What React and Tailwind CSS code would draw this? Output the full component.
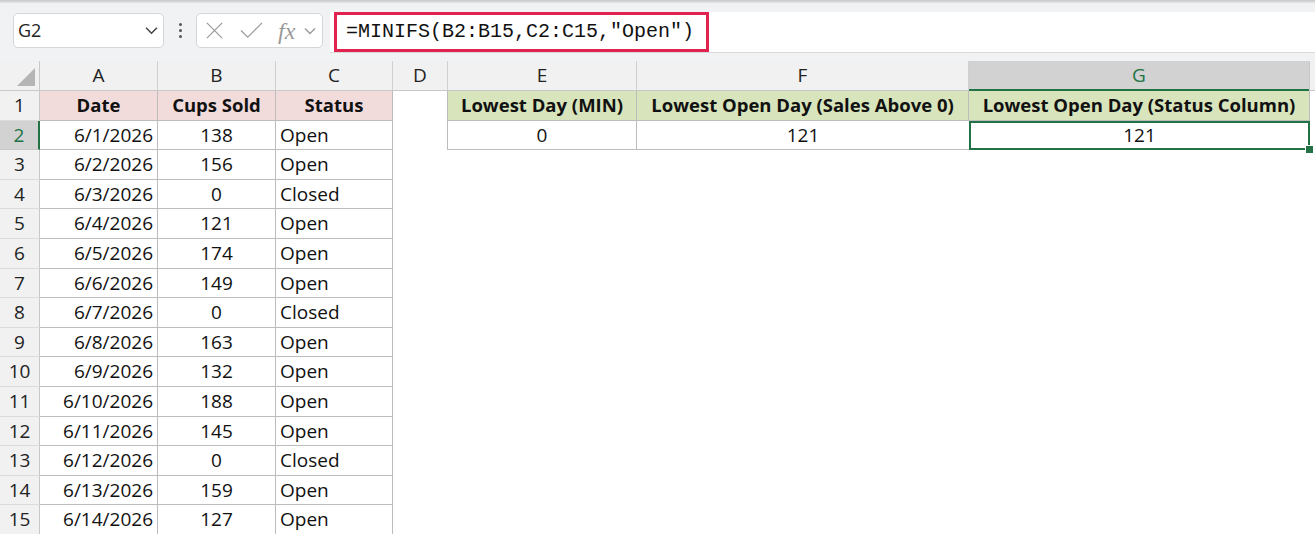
import React from 'react';

const cols = [
  { key: 'A', w: 'w-[118px]' },
  { key: 'B', w: 'w-[118px]' },
  { key: 'C', w: 'w-[117px]' },
  { key: 'D', w: 'w-[55px]' },
  { key: 'E', w: 'w-[189px]' },
  { key: 'F', w: 'w-[332px]' },
  { key: 'G', w: 'w-[341px]' },
];

const sales = [
  ['6/1/2026', 138, 'Open'],
  ['6/2/2026', 156, 'Open'],
  ['6/3/2026', 0, 'Closed'],
  ['6/4/2026', 121, 'Open'],
  ['6/5/2026', 174, 'Open'],
  ['6/6/2026', 149, 'Open'],
  ['6/7/2026', 0, 'Closed'],
  ['6/8/2026', 163, 'Open'],
  ['6/9/2026', 132, 'Open'],
  ['6/10/2026', 188, 'Open'],
  ['6/11/2026', 145, 'Open'],
  ['6/12/2026', 0, 'Closed'],
  ['6/13/2026', 159, 'Open'],
  ['6/14/2026', 127, 'Open'],
];

const Chevron = ({ className }) => (
  <svg viewBox="0 0 12 8" className={className} fill="none" stroke="currentColor" strokeWidth="1.4">
    <path d="M1 1.5l5 5 5-5" />
  </svg>
);

const FormulaBar = () => (
  <div className="h-[61px] bg-[#f1f2f4] flex flex-col">
    <div className="h-[3px] bg-gradient-to-b from-[#c9c9c9] to-[#e4e4e4]" />
    <div className="flex flex-1 items-start">
      <div className="ml-[13px] mt-[10px] w-[151px] h-[35px] bg-white border border-[#d6d6d6] rounded-[5px] flex items-center pl-[4px] pr-[5px]">
        <span className="text-[18px] text-[#222] flex-1">G2</span>
        <Chevron className="w-[13px] h-[9px] text-[#444]" />
      </div>
      <div className="w-[32px] h-[35px] mt-[10px] flex flex-col items-center justify-center gap-[3px]">
        <span className="w-[3px] h-[3px] bg-[#555] rounded-full" />
        <span className="w-[3px] h-[3px] bg-[#555] rounded-full" />
        <span className="w-[3px] h-[3px] bg-[#555] rounded-full" />
      </div>
      <div className="mt-[10px] w-[127px] h-[35px] bg-white border border-[#d6d6d6] rounded-[5px] flex items-center pl-[8px] text-[#9a9a9a]">
        <svg viewBox="0 0 20 20" className="w-[19px] h-[19px]" fill="none" stroke="currentColor" strokeWidth="1.3">
          <path d="M2 2l16 16M18 2L2 18" />
        </svg>
        <svg viewBox="0 0 24 20" className="ml-[15px] w-[25px] h-[19px]" fill="none" stroke="currentColor" strokeWidth="1.3">
          <path d="M1 10l7 7L23 2" />
        </svg>
        <span className="ml-[14px] text-[24px] italic leading-none" style={{ fontFamily: '"Liberation Serif", serif' }}>fx</span>
        <Chevron className="ml-[9px] w-[12px] h-[8px] text-[#9a9a9a]" />
      </div>
      <div className="ml-[7px] mt-[9px] flex-1 h-[41px] bg-white border-b border-[#d9d9d9] flex items-center">
        <div className="ml-[4px] h-[40px] w-[375px] border-[3px] border-[#e0244f] flex items-center pl-[9px]">
          <span className="text-[20px] text-[#111] whitespace-nowrap" style={{ fontFamily: '"Liberation Mono", monospace' }}>
            =MINIFS(B2:B15,C2:C15,"Open")
          </span>
        </div>
      </div>
    </div>
  </div>
);

const HeaderRow = () => (
  <div className="flex h-[30px] bg-[#f1f1f1] border-b border-[#c8c8c8] text-[19px]">
    <div className="w-[40px] relative border-r border-[#c8c8c8]">
      <div className="absolute right-[4px] bottom-[4px] w-0 h-0 border-l-[18px] border-l-transparent border-b-[18px] border-b-[#b5b5b5]" />
    </div>
    {cols.map((c) =>
      c.key === 'G' ? (
        <div key={c.key} className={`${c.w} bg-[#d2d2d2] text-[#217346] border-r border-[#c8c8c8] flex items-center justify-center relative`}>
          {c.key}
          <div className="absolute left-0 right-0 bottom-[-1px] h-[2px] bg-[#217346]" />
        </div>
      ) : (
        <div key={c.key} className={`${c.w} border-r border-[#d0d0d0] flex items-center justify-center text-[#222]`}>
          {c.key}
        </div>
      )
    )}
    <div className="flex-1" />
  </div>
);

const RowHead = ({ n, active }) =>
  active ? (
    <div className="w-[40px] bg-[#d2d2d2] text-[#217346] flex items-center justify-center border-r-[2px] border-[#217346] border-b border-b-[#c8c8c8]">
      {n}
    </div>
  ) : (
    <div className="w-[40px] bg-[#f1f1f1] text-[#222] flex items-center justify-center border-r border-[#c8c8c8] border-b border-b-[#dcdcdc]">
      {n}
    </div>
  );

const Cell = ({ w, className = '', children }) => (
  <div className={`${w} border-r border-b border-[#bcbcbc] flex items-center px-[4px] whitespace-nowrap ${className}`}>{children}</div>
);

const Blank = ({ w }) => <div className={w} />;

export default function App() {
  return (
    <div className="w-[1315px] h-[534px] overflow-hidden bg-white text-[19px] text-[#111]" style={{ fontFamily: '"Open Sans", sans-serif' }}>
      <FormulaBar />
      <HeaderRow />

      {/* row 1: table headings */}
      <div className="flex h-[29.6px]">
        <RowHead n={1} />
        <Cell w="w-[118px]" className="bg-[#f2dcdb] font-bold text-[18.5px] justify-center">Date</Cell>
        <Cell w="w-[118px]" className="bg-[#f2dcdb] font-bold text-[18.5px] justify-center">Cups Sold</Cell>
        <Cell w="w-[117px]" className="bg-[#f2dcdb] font-bold text-[18.5px] justify-center">Status</Cell>
        <Blank w="w-[55px] border-r border-[#bcbcbc]" />
        <Cell w="w-[189px]" className="bg-[#d8e4bc] font-bold text-[18.5px] justify-center">Lowest Day (MIN)</Cell>
        <Cell w="w-[332px]" className="bg-[#d8e4bc] font-bold text-[18.5px] justify-center">Lowest Open Day (Sales Above 0)</Cell>
        <Cell w="w-[341px]" className="bg-[#d8e4bc] font-bold text-[18.5px] justify-center">Lowest Open Day (Status Column)</Cell>
      </div>

      {sales.map(([date, cups, status], i) => {
        const n = i + 2;
        return (
          <div key={n} className="flex h-[29.6px]">
            <RowHead n={n} active={n === 2} />
            <Cell w="w-[118px]" className="justify-end">{date}</Cell>
            <Cell w="w-[118px]" className="justify-center">{cups}</Cell>
            <Cell w="w-[117px]">{status}</Cell>
            {n === 2 ? (
              <>
                <Blank w="w-[55px] border-r border-[#bcbcbc]" />
                <Cell w="w-[189px]" className="justify-center">0</Cell>
                <Cell w="w-[332px]" className="justify-center border-r-0">121</Cell>
                <div className="w-[341px] relative border-[2px] border-[#217346] flex items-center justify-center">
                  121
                  <div className="absolute z-10 right-[-6px] bottom-[-6px] w-[9px] h-[9px] bg-[#217346] border border-white" />
                </div>
              </>
            ) : null}
          </div>
        );
      })}
    </div>
  );
}
